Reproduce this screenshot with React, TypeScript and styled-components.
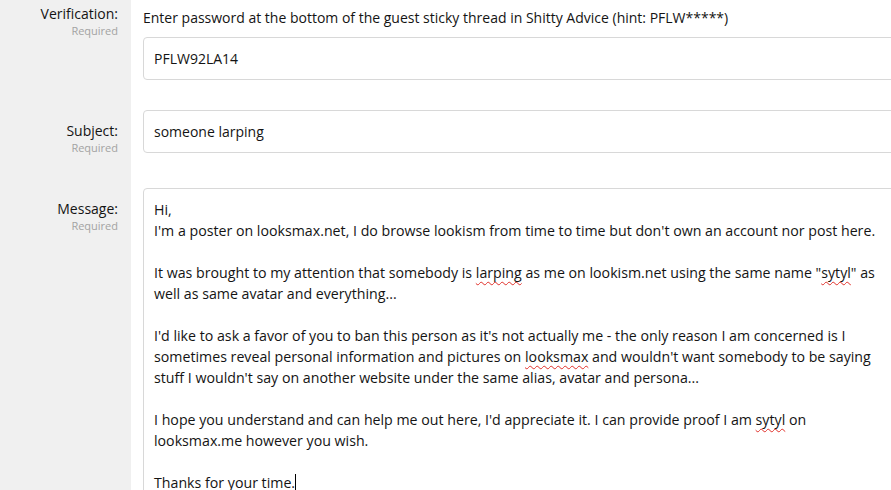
import React from 'react';
import styled, { createGlobalStyle } from 'styled-components';

const GlobalStyle = createGlobalStyle`
  html, body {
    margin: 0;
    padding: 0;
    overflow: hidden;
    background: #fff;
  }
  body {
    font-family: 'Open Sans', 'Noto Sans', sans-serif;
    color: #141414;
  }
`;

const Form = styled.div`
  width: 1000px;
  background: linear-gradient(to right, #f0f0f0 0, #f0f0f0 131px, #fff 131px);
  min-height: 490px;
`;

const Row = styled.dl`
  display: grid;
  grid-template-columns: 131px 1fr;
  margin: 0;
`;

const Term = styled.dt<{ $top: number }>`
  padding: ${({ $top }) => $top}px 13px 0 0;
  text-align: right;
`;

const Label = styled.div`
  font-size: 14px;
  line-height: 19px;
  color: #141414;
`;

const Hint = styled.div`
  font-size: 11px;
  line-height: 16px;
  color: #a3a3a3;
`;

const Desc = styled.dd<{ $top: number; $bottom: number }>`
  margin: 0;
  padding: ${({ $top, $bottom }) => `${$top}px 0 ${$bottom}px 12px`};
`;

const Explain = styled.div`
  font-size: 14px;
  line-height: 21px;
  margin-bottom: 9px;
`;

const Input = styled.div<{ $tall?: boolean }>`
  border: 1px solid #d8d8d8;
  border-radius: 4px;
  padding: 10px;
  font-size: ${({ $tall }) => ($tall ? '14.2px' : '14px')};
  line-height: 21px;
  background: #fff;
  min-height: ${({ $tall }) => ($tall ? '400px' : 'auto')};
  white-space: pre;
`;

const Typo = styled.span`
  text-decoration: underline wavy #e0302a;
  text-decoration-thickness: 1px;
  text-underline-offset: 3px;
`;

const Caret = styled.span`
  display: inline-block;
  width: 1px;
  height: 17px;
  background: #000;
  vertical-align: -3px;
`;

export default function App() {
  return (
    <>
      <GlobalStyle />
      <Form>
        <Row>
          <Term $top={4}>
            <Label>Verification:</Label>
            <Hint>Required</Hint>
          </Term>
          <Desc $top={7} $bottom={15}>
            <Explain>
              Enter password at the bottom of the guest sticky thread in Shitty Advice (hint: PFLW*****)
            </Explain>
            <Input>PFLW92LA14</Input>
          </Desc>
        </Row>
        <Row>
          <Term $top={26}>
            <Label>Subject:</Label>
            <Hint>Required</Hint>
          </Term>
          <Desc $top={15} $bottom={15}>
            <Input>someone larping</Input>
          </Desc>
        </Row>
        <Row>
          <Term $top={31}>
            <Label>Message:</Label>
            <Hint>Required</Hint>
          </Term>
          <Desc $top={20} $bottom={0}>
            <Input $tall>
              {'Hi,\n'}
              {"I'm a poster on looksmax.net, I do browse lookism from time to time but don't own an account nor post here.\n"}
              {'\n'}
              {'It was brought to my attention that somebody is '}
              <Typo>larping</Typo>
              {' as me on lookism.net using the same name "'}
              <Typo>sytyl</Typo>
              {'" as\n'}
              {'well as same avatar and everything...\n'}
              {'\n'}
              {"I'd like to ask a favor of you to ban this person as it's not actually me - the only reason I am concerned is I\n"}
              {'sometimes reveal personal information and pictures on '}
              <Typo>looksmax</Typo>
              {" and wouldn't want somebody to be saying\n"}
              {"stuff I wouldn't say on another website under the same alias, avatar and persona...\n"}
              {'\n'}
              {"I hope you understand and can help me out here, I'd appreciate it. I can provide proof I am "}
              <Typo>sytyl</Typo>
              {' on\n'}
              {'looksmax.me however you wish.\n'}
              {'\n'}
              {'Thanks for your time.'}
              <Caret />
            </Input>
          </Desc>
        </Row>
      </Form>
    </>
  );
}
